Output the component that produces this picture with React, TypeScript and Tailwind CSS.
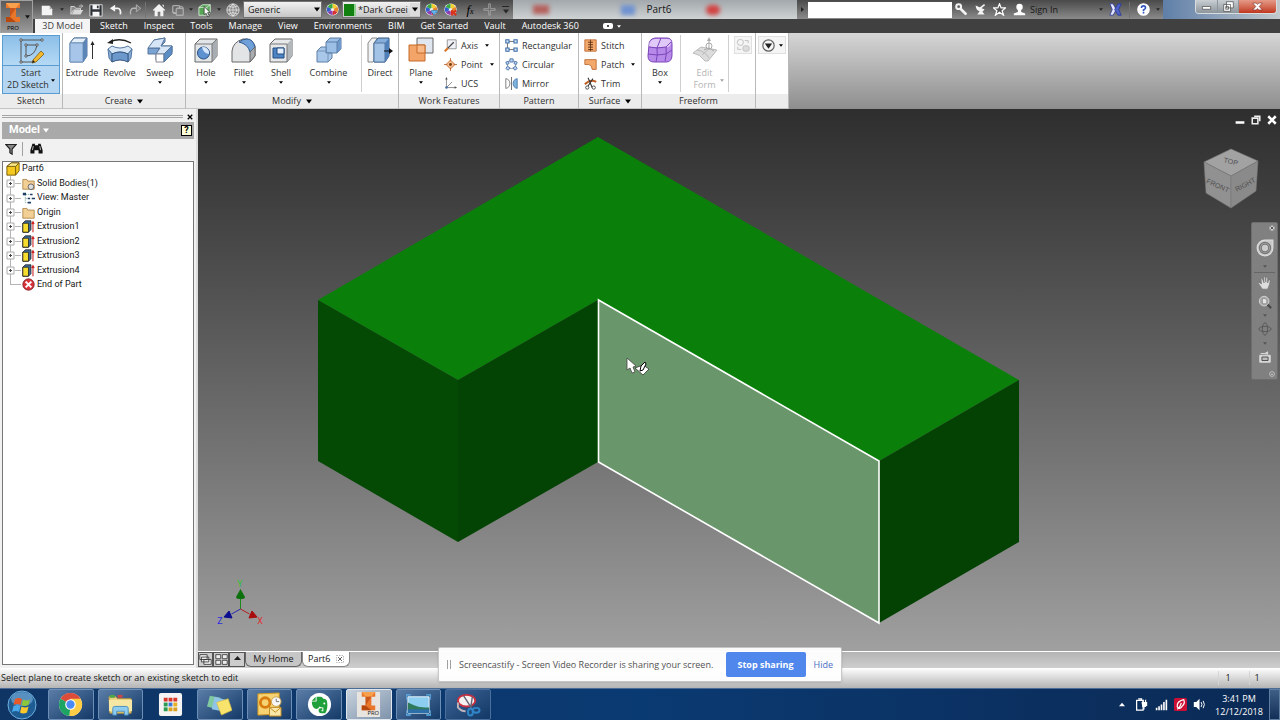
import type { ReactNode } from "react";

const ICON_BLUE = "#3f6ea8";

function Icon({ size = 16, box = 16, children }: { size?: number; box?: number; children: ReactNode }) {
  return (
    <svg width={size} height={size} viewBox={`0 0 ${box} ${box}`} fill="none" className="shrink-0" aria-hidden="true">
      {children}
    </svg>
  );
}

function Caret({ className = "text-black", width = 4 }: { className?: string; width?: number }) {
  return (
    <svg width={width} height={width - 1} viewBox="0 0 6 4" className={`shrink-0 ${className}`} aria-hidden="true">
      <path d="M0 0h6L3 4z" fill="currentColor" />
    </svg>
  );
}

/* ---------- Title bar ---------- */

function InventorMark() {
  return (
    <>
      <path d="M4 1h14v5h-4v9h4v5H4v-5h4V6H4z" fill="#e8762b" />
      <path d="M4 1h14l-4 5H8z" fill="#f9a04c" />
      <path d="M4 20v-5h4l6 5z" fill="#b9480f" />
      <path d="M8 6h6l-6 9z" fill="#c9571b" />
    </>
  );
}

function ColorWheel({ badge }: { badge?: "down" | "x" }) {
  return (
    <Icon size={13}>
      <circle cx="8" cy="8" r="7.500" fill="#fff" />
      <path d="M8 8V1a7 7 0 0 1 6 3.500z" fill="#f0d030" />
      <path d="M8 8l6-3.500a7 7 0 0 1 0 7z" fill="#e8862a" />
      <path d="M8 8l6 3.500A7 7 0 0 1 8 15z" fill="#d83030" />
      <path d="M8 8v7a7 7 0 0 1-6-3.500z" fill="#8a3fb0" />
      <path d="M8 8l-6 3.500a7 7 0 0 1 0-7z" fill="#3560d0" />
      <path d="M8 8L2 4.500A7 7 0 0 1 8 1z" fill="#3aa845" />
      <circle cx="8" cy="8" r="2" fill="#eee" />
      {badge === "down" && <path d="M8 9h7v3h-2l-2 3-2-3H8z" fill="#62b8f0" stroke="#1c5c94" strokeWidth=".6" />}
      {badge === "x" && <path d="M9 9l6 6M15 9l-6 6" stroke="#d8341c" strokeWidth="2.500" />}
    </Icon>
  );
}

const quickIcons: { label: string; width: string; node: ReactNode }[] = [
  { label: "New", width: "w-[20px]", node: <Icon size={14}><path d="M2 3h9l3 4v7H2z" fill="#f4f4f4" /><path d="M11 3v4h3z" fill="#aaa" /></Icon> },
  { label: "New options", width: "w-[10px]", node: <Caret className="text-neutral-800" /> },
  { label: "Open", width: "w-[19px]", node: <Icon size={14}><path d="M1 13V4h4l1.500 2H12v2H4z" fill="#8a8a8a" stroke="#ddd" /><path d="M2 13l3-5h10l-3 5z" fill="#d8d8d8" /><path d="M10 3.500h4M12.500 1.500l2 2-2 2" stroke="#ccc" /></Icon> },
  { label: "Save", width: "w-[20px]", node: <Icon size={14}><path d="M1 2h14v13H1z" fill="#2f3338" stroke="#e8e8e8" /><path d="M4 2h8v5H4zM4 10h8v5H4z" fill="#f6f6f6" /><path d="M9 3h2v3H9z" fill="#333" /></Icon> },
  { label: "Undo", width: "w-[19px]", node: <Icon size={14}><path d="M4 6h6q4 1 3 7" stroke="#f4f4f4" strokeWidth="2" /><path d="M1 6l6-4v8z" fill="#f4f4f4" /></Icon> },
  { label: "Redo", width: "w-[20px]", node: <Icon size={14}><path d="M12 6H6Q2 7 3 13" stroke="#b4b4b4" strokeWidth="1.500" /><path d="M14.500 6l-5-4v8z" fill="#777" stroke="#b4b4b4" /></Icon> },
];

const quickIconsRight: { label: string; width: string; node: ReactNode }[] = [
  { label: "Home", width: "w-[20px]", node: <Icon size={14}><path d="M8 1l7 7-1 1-1-1v7H9.500v-5h-3v5H3V8L2 9 1 8z" fill="#f2f2f2" /><path d="M11.500 2h2v3z" fill="#f2f2f2" /></Icon> },
  { label: "Link", width: "w-[18px]", node: <Icon size={14}><rect x="2" y="3" width="8" height="8" rx="1" stroke="#aaa" strokeWidth="1.500" /><rect x="6" y="6" width="8" height="8" rx="1" fill="#777" stroke="#aaa" strokeWidth="1.500" /><path d="M9 5q4-3 5 1M6 12q-4 1-4-2" stroke="#bbb" /></Icon> },
  { label: "Link options", width: "w-[8px]", node: <Caret className="text-neutral-800" /> },
  { label: "Select", width: "w-[20px]", node: <Icon size={14}><path d="M1 5l4-3h9v9l-4 3H1z" fill="#57a557" stroke="#d9ead9" /><path d="M1 5h9v9M10 5l4-3" stroke="#d9ead9" /><path d="M7 4l7 7h-3l2 4-2 1-1.500-4L7 13z" fill="#fff" stroke="#222" strokeWidth=".8" /></Icon> },
  { label: "Select options", width: "w-[8px]", node: <Caret className="text-neutral-800" /> },
  { label: "Appearance", width: "w-[20px]", node: <Icon size={14}><circle cx="8" cy="8" r="7" fill="#888" stroke="#ddd" /><path d="M8 1v14M1 8h14M3 3.500q5 3 10 0M3 12.500q5-3 10 0M8 1q-8 7 0 14M8 1q8 7 0 14" stroke="#eee" strokeWidth=".8" /></Icon> },
];

function TitleBar() {
  return (
    <div className="flex h-[19px] items-stretch bg-linear-to-b from-[#4a4a4a] to-[#8b8b8b]">
      <div className="flex items-center pl-1">
        {quickIcons.map((q) => (
          <button key={q.label} aria-label={q.label} className={`flex items-center justify-center ${q.width}`}>{q.node}</button>
        ))}
        <span className="h-4 w-px bg-neutral-500" />
        <span className="w-[3px]" />
        {quickIconsRight.map((q) => (
          <button key={q.label} aria-label={q.label} className={`flex items-center justify-center ${q.width}`}>{q.node}</button>
        ))}
      </div>
      <div className="flex items-center">
        <label className="relative flex w-[79px] items-center">
          <select aria-label="Material" className="h-[17px] w-full appearance-none border border-neutral-500 bg-linear-to-b from-[#f2f2f2] to-[#c6c6c6] pl-1 text-neutral-900">
            <option>Generic</option>
          </select>
          <span className="pointer-events-none absolute right-[2px]"><Caret width={6} /></span>
        </label>
        <button aria-label="Adjust appearance" className="flex w-[20px] justify-center"><ColorWheel /></button>
        <label className="relative flex w-[79px] items-center">
          <select aria-label="Appearance" className="h-[17px] w-full appearance-none border border-neutral-500 bg-linear-to-b from-[#f2f2f2] to-[#c6c6c6] pl-[15px] text-neutral-900">
            <option>*Dark Greei</option>
          </select>
          <span className="pointer-events-none absolute left-[2px] size-[12px] border-r-2 border-[#8fd08f] bg-[#118011]" />
          <span className="pointer-events-none absolute right-[1px] bg-[#dcdcdc] px-[2px] py-1"><Caret width={6} /></span>
        </label>
        <button aria-label="Adjust" className="flex w-[20px] justify-center"><ColorWheel badge="down" /></button>
        <button aria-label="Clear" className="flex w-[19px] justify-center"><ColorWheel badge="x" /></button>
        <button className="w-[20px] text-center font-['Liberation_Serif',serif] text-[13px] leading-none text-black italic">f<span className="text-[8px]">x</span></button>
        <button aria-label="Add" className="flex w-[18px] justify-center"><Icon size={13}><path d="M7 1h2v6h6v2H9v6H7V9H1V7h6z" stroke="#a8a8a8" /></Icon></button>
        <button aria-label="Customize" className="flex w-[15px] flex-col items-center gap-[2px]"><span className="h-px w-[7px] bg-neutral-800" /><Caret className="text-neutral-800" width={6} /></button>
      </div>
      <div className="relative flex min-w-0 flex-1 items-center justify-center overflow-hidden bg-linear-to-b from-[#a2a8ac] to-[#cfd2d3] text-neutral-900">
        <span className="absolute left-[20px] h-[9px] w-[16px] bg-[#b5605c] blur-[2px]" />
        <span className="absolute left-[108px] h-[10px] w-[14px] bg-[#6f92d0] blur-[2px]" />
        <span className="absolute left-[193px] h-[10px] w-[14px] rounded-full bg-[#d34343] blur-[2px]" />
        <span className="relative pl-2 text-[10px]">Part6</span>
      </div>
      <div className="flex w-[366px] shrink-0 items-center">
        <span className="w-[11px] shrink-0 pl-1"><svg width="3" height="5" viewBox="0 0 3 5" aria-hidden="true"><path d="M0 0l3 2.500L0 5z" fill="#222" /></svg></span>
        <input aria-label="Search" className="h-[16px] w-[144px] shrink-0 bg-white px-1" />
        <div className="flex flex-1 items-center">
          <button aria-label="Subscription" className="flex w-[19px] justify-center"><Icon size={13}><circle cx="4.500" cy="4.500" r="3" stroke="#f4f4f4" strokeWidth="2.500" /><path d="M7 5l8 8-1.500 2-2-1-7-7z" fill="#f4f4f4" /></Icon></button>
          <button aria-label="Communication" className="flex w-[19px] justify-center"><Icon size={13}><path d="M2 3q0 7 8 8L13 8zM4 14h9l-3-4H7z" fill="#f4f4f4" /><path d="M7 7l6-5" stroke="#f4f4f4" strokeWidth="2" /></Icon></button>
          <button aria-label="Favorites" className="flex w-[19px] justify-center"><Icon size={13}><path d="M8 1l2 5h5.500l-4.300 3.500L13 15 8 11.500 3 15l1.800-5.500L.5 6H6z" fill="#555" stroke="#fff" strokeWidth="1.500" /></Icon></button>
          <button className="flex w-[96px] items-center gap-1 pl-1 text-neutral-900">
            <Icon size={13}><circle cx="8" cy="5" r="4" fill="#fff" /><path d="M6 8h4v3l5 2v2H1v-2l5-2z" fill="#fff" /></Icon>
            Sign In
          </button>
          <span className="-ml-2 flex w-2 justify-center"><Caret className="text-neutral-800" /></span>
          <button aria-label="Exchange" className="flex w-[20px] justify-center"><Icon size={13}><path d="M1 1h4l4 7-4 7H1l3-7z" fill="#e6e8ff" stroke="#2c3a98" /><path d="M15 1h-4L7 8l4 7h4l-3-7z" fill="#4e62c8" stroke="#2c3a98" /></Icon></button>
          <span className="mx-1 h-4 w-px bg-neutral-500" />
          <button aria-label="Help" className="flex w-[19px] justify-center"><Icon size={13}><circle cx="8" cy="8" r="7" fill="#fff" stroke="#fff" strokeWidth="1.500" /><path d="M5.500 6q0-2.500 2.500-2.500T10.500 6Q10.500 7 8 8.500V10M8 11v2" stroke="#2f55c0" strokeWidth="2" /></Icon></button>
          <span className="ml-[3px]"><Caret className="text-neutral-800" /></span>
        </div>
      </div>
      <div className="flex w-[117px] shrink-0 items-start justify-end bg-linear-to-r from-[#5f7fa8] to-[#c3c9cc] pr-[3px]">
        <div className="flex h-[14px] overflow-hidden rounded-b-sm border border-t-0 border-[#d8dde0]">
          <button aria-label="Minimize" className="flex w-[22px] items-center justify-center border-r border-[#8e969b] bg-linear-to-b from-[#c9cfd3] to-[#8d969c]"><Icon size={11}><path d="M2 8h12v4H2z" fill="#fff" stroke="#444" /></Icon></button>
          <button aria-label="Restore" className="flex w-[21px] items-center justify-center border-r border-[#8e969b] bg-linear-to-b from-[#c9cfd3] to-[#8d969c]"><Icon size={11}><path d="M5 1h10v9H5zM1 5h10v10H1zM4 8h4v4H4z" stroke="#444" strokeWidth="1" fill="#fff" /></Icon></button>
          <button aria-label="Close" className="flex w-[37px] items-center justify-center bg-linear-to-b from-[#e49a88] to-[#c0351c]"><Icon size={11}><path d="M1 3h5l2 2 2-2h5l-4.500 5L15 13h-5l-2-2-2 2H1l4.500-5z" fill="#fff" stroke="#6a2018" strokeWidth=".8" /></Icon></button>
        </div>
      </div>
    </div>
  );
}

const tabs = ["Sketch", "Inspect", "Tools", "Manage", "View", "Environments", "BIM", "Get Started", "Vault", "Autodesk 360"];

function Header() {
  return (
    <header className="flex bg-[#404040]">
      <button aria-label="Inventor Professional menu" className="flex h-[33px] w-[33px] shrink-0 items-center border border-neutral-400 bg-linear-to-b from-[#5a5a5a] to-[#9a9a9a]">
        <span className="flex w-6 flex-col items-center text-[6px] leading-[8px] text-black">
          <Icon size={22} box={22}><InventorMark /></Icon>
          PRO
        </span>
        <Caret className="text-neutral-900" width={5} />
      </button>
      <div className="min-w-0 flex-1">
        <TitleBar />
        <nav className="flex h-[14px] items-center gap-4 leading-[14px] text-white">
          <button className="-mr-[6px] ml-[2px] h-full w-[55px] bg-[#f4f4f4] text-neutral-700">3D Model</button>
          {tabs.map((t) => (
            <button key={t} className="whitespace-nowrap">{t}</button>
          ))}
          <button aria-label="Display options" className="ml-2 flex items-center gap-1">
            <span className="flex h-[6px] w-[10px] items-center justify-center rounded-xs bg-white"><span className="size-[2px] bg-neutral-600" /></span>
            <Caret className="text-white" />
          </button>
        </nav>
      </div>
    </header>
  );
}

/* ---------- Ribbon ---------- */

const big = {
  sketch: (
    <Icon size={26} box={26}>
      <path d="M3 2v22M3 2h21M3 24h12" stroke="#555" />
      <path d="M8 7v11q9 0 11-11z" stroke="#555" />
      <path d="M2 1h2v2H2zM23 1h2v2h-2zM2 23h2v2H2zM7 6h2v2H7zM18 6h2v2h-2zM7 17h2v2H7z" fill="#fff" stroke="#444" strokeWidth=".8" />
      <path d="M15 22l8-9 3 3-8 8-4 1z" fill="#f2b92e" stroke="#7d5b10" strokeWidth=".8" />
      <path d="M14 25l1-3 2 2z" fill="#222" />
    </Icon>
  ),
  extrude: (
    <Icon size={26} box={26}>
      <path d="M1 6l4-5h13v18l-4 6H1z" fill="#7fa6d3" stroke="#55779f" />
      <path d="M1 6l4-5h13l-4 5z" fill="#e5effa" stroke="#55779f" />
      <path d="M1 6h13v19H1z" fill="#a6c5e8" stroke="#7294bb" />
      <path d="M14 6l4-5v18l-4 6z" fill="#5c86b8" />
      <path d="M23.500 22V6" stroke="#333" /><path d="M21.500 8l2-4 2 4z" fill="#222" />
    </Icon>
  ),
  revolve: (
    <Icon size={26} box={26}>
      <path d="M3 5q10-5 21 1" stroke="#222" strokeWidth="1.300" /><path d="M0 6l6-4v5z" fill="#222" />
      <path d="M1 12l4-3q8 4 16 0l4 3-4 5q-8-4-16 0z" fill="#d9e8f8" stroke="#55779f" />
      <path d="M1 12l4 5v8l-3-4z" fill="#86add8" stroke="#55779f" />
      <path d="M25 12l-4 5v8l3-4z" fill="#86add8" stroke="#55779f" />
      <path d="M5 17q8-4 16 0v8q-8-4-16 0z" fill="#6c98cb" stroke="#35577f" />
    </Icon>
  ),
  sweep: (
    <Icon size={26} box={26}>
      <path d="M1 11h11v6H1z" fill="#7aa3d2" stroke="#55779f" />
      <path d="M7 3l11-2v4l-4 4h11v6l-8 8H9v-6l4-6z" fill="#7aa3d2" stroke="#55779f" />
      <path d="M7 3l11-2-4 8h11l-8 8H9l4-6H1z" fill="#d7e6f6" stroke="#55779f" />
      <path d="M9 17h8v8H9z" fill="#fff" stroke="#889" /><path d="M17 17l8-8v8l-8 8z" fill="#5c8cc4" stroke="#55779f" />
    </Icon>
  ),
  hole: (
    <Icon size={26} box={26}>
      <path d="M2 7l5-5h17v17l-5 6H2z" fill="#e2e5e8" stroke="#666" /><path d="M19 7l5-5v17l-5 6z" fill="#a7adb3" /><path d="M2 7h17v18M19 7l5-5" stroke="#777" />
      <circle cx="10.500" cy="16" r="6" fill="#5f92d0" stroke="#234c80" />
      <path d="M9 10a6 6 0 0 1 7 7q-6-1-7-7z" fill="#d7e8fa" />
    </Icon>
  ),
  fillet: (
    <Icon size={26} box={26}>
      <path d="M1 25V14Q2 5 12 2q9-1 12 7v10l-5 6z" fill="#e2e4e6" stroke="#666" />
      <path d="M8 5q4-3 8-3 6 0 8 8l-5 5Q17 7 8 5z" fill="#6fa0da" stroke="#2f5b90" />
      <path d="M19 15v10l5-6v-9z" fill="#a9adb1" stroke="#666" />
    </Icon>
  ),
  shell: (
    <Icon size={26} box={26}>
      <path d="M2 7l5-5h17v17l-5 6H2z" fill="#e6e8ea" stroke="#666" /><path d="M19 7l5-5v17l-5 6z" fill="#b2b7bc" /><path d="M2 7h17v18" stroke="#777" />
      <path d="M5 11h11v10H5z" fill="#4c84c4" stroke="#234c80" /><path d="M9 11h7v6H9z" fill="#e3effc" stroke="#234c80" />
    </Icon>
  ),
  combine: (
    <Icon size={26} box={26}>
      <path d="M10 5l4-4h11v11l-4 4H10z" fill="#9cbfe5" stroke="#5c7fa8" /><path d="M21 5l4-4v11l-4 4z" fill="#6f99ca" /><path d="M10 5h11v11M21 5l4-4" stroke="#5c7fa8" />
      <path d="M1 14l4-4h5v6h6v5l-4 4H1z" fill="#a9c7e9" stroke="#5c7fa8" /><path d="M1 14h9M12 17v8M12 17l4-1" stroke="#7795b8" />
    </Icon>
  ),
  direct: (
    <Icon size={26} box={26}>
      <path d="M1 6l4-5h5v19l-4 5H1z" fill="#f0f1f2" stroke="#888" /><path d="M7 6l4-5h11v18l-4 6H7z" fill="#86aedb" stroke="#35577f" />
      <path d="M7 6h11v19H7z" fill="#a3c3e6" stroke="#55779f" /><path d="M18 6l4-5v18l-4 6z" fill="#4f7fb8" />
      <path d="M17 14h6" stroke="#111" /><path d="M22 11l4 3-4 3z" fill="#111" />
    </Icon>
  ),
  plane: (
    <Icon size={26} box={26}>
      <path d="M9 1h16v15H9z" fill="#dfe6ef" stroke="#666" /><path d="M1 8h16v16H1z" fill="#f3a468" stroke="#c56a28" /><path d="M9 8h8v8H9z" fill="#f7b988" stroke="#c56a28" />
    </Icon>
  ),
  box: (
    <Icon size={26} box={26}>
      <path d="M2 8q0-6 6-7h12q5 0 5 6v11q0 7-6 7H7q-6 0-6-6z" fill="#b78aea" stroke="#7a45b8" />
      <path d="M2 9q0-6 6-7h12q5 0 4 4-1 5-5 4H7q-5 0-5-1z" fill="#e0c8f8" />
      <path d="M2 10q8 2 17 0l5-5M19 10q1 8-1 14M10 11q1 7-1 14M1 17q9 2 18 0l6-4M10 11l4-10" stroke="#7a45b8" />
    </Icon>
  ),
  edit: (
    <Icon size={26} box={26}>
      <path d="M1 16l8-6 16 3-9 11h-3q-5-7-12-8z" fill="#dcdcdc" stroke="#bbb" /><path d="M5 13q8 1 12 8M10 18l8-7" stroke="#bbb" />
      <path d="M17 13V2M12 13l5-2 5 3" stroke="#aaa" /><circle cx="17" cy="9" r="3" stroke="#aaa" /><path d="M15 4l2-4 2 4z" fill="#aaa" />
    </Icon>
  ),
};

const small = {
  axis: <Icon size={13}><path d="M4 1h11v11H4z" stroke="#888" fill="#eef1f5" /><path d="M1 15L12 4" stroke="#444" strokeWidth="1.500" /><path d="M1 15l4-4" stroke="#e07828" strokeWidth="2.500" /></Icon>,
  point: <Icon size={13}><path d="M8 2.500L13.500 8 8 13.500 2.500 8z" fill="#f7c08e" stroke="#b8622a" /><path d="M8 0v4M8 12v4M0 8h4M12 8h4" stroke="#b8622a" /><circle cx="8" cy="8" r="1.800" fill="#7a3a12" /></Icon>,
  ucs: <Icon size={13}><path d="M3 1v12h12M3 13l7-7" stroke="#777" /><path d="M1.500 3L3 0l1.500 3zM13 11.500l3 1.500-3 1.500z" fill="#555" /><circle cx="3" cy="13" r="1.500" fill={ICON_BLUE} /></Icon>,
  rect: <Icon size={13}><path d="M3 5v6M5 3h6M5 13h6" stroke="#555" /><path d="M1 1h4v4H1zM11 1h4v4h-4zM1 11h4v4H1zM11 11h4v4h-4z" fill="#cfe0f4" stroke={ICON_BLUE} strokeWidth="1.300" /></Icon>,
  circ: <Icon size={13}><circle cx="8" cy="8" r="5" stroke="#888" /><path d="M6 1h4v4H6zM1 5l3-1 1 3-3 1zM12 4l3 1-1 3-3-1zM3 10l3 2-2 3-3-2zM13 10l2 3-3 2-2-3z" fill="#bcd3ef" stroke={ICON_BLUE} /></Icon>,
  mirror: <Icon size={13}><path d="M8 0v16" stroke="#555" /><path d="M1 2q5 1 5 6t-5 6z" fill="#fff" stroke="#666" /><path d="M15 2q-5 1-5 6t5 6z" fill="#7fb4dc" stroke={ICON_BLUE} /></Icon>,
  stitch: <Icon size={13}><path d="M1 1h14v14H1z" fill="#f3a86c" stroke="#b8622a" /><path d="M8 1v14" stroke="#6b3512" /><path d="M5 4h6M5 7h6M5 10h6M5 13h6" stroke="#4a2409" /></Icon>,
  patch: <Icon size={13}><path d="M1 2h14v12h-5q0-5-4-6H1z" fill="#f3a86c" stroke="#b8622a" /></Icon>,
  trim: <Icon size={13}><path d="M1 9q7-7 14-3" stroke="#c06028" strokeWidth="2.500" /><path d="M5 1l5 12M11 2L5 11" stroke="#333" strokeWidth="1.300" /><circle cx="4" cy="13" r="2" stroke="#333" /><circle cx="12" cy="13" r="2" stroke="#333" /></Icon>,
};

type BigTool = { label: string; icon: ReactNode; width: string; menu?: boolean };

function BigButton({ label, icon, width, menu }: BigTool) {
  return (
    <button className={`flex shrink-0 flex-col items-center pt-1 ${width}`}>
      {icon}
      <span className="mt-1 leading-[12px]">{label}</span>
      {menu && <span className="mt-[2px]"><Caret /></span>}
    </button>
  );
}

function SmallButton({ label, icon, menu }: { label: string; icon: ReactNode; menu?: boolean }) {
  return (
    <button className="flex h-[19px] items-center gap-1 text-left">
      {icon}
      <span>{label}</span>
      {menu && <span className="ml-[3px]"><Caret /></span>}
    </button>
  );
}

function Panel({ title, width, menu, children }: { title: string; width: string; menu?: boolean; children?: ReactNode }) {
  return (
    <section className={`flex shrink-0 flex-col border-r border-[#b9b9b9] bg-white ${width}`}>
      <div className="flex flex-1 items-stretch">{children}</div>
      <div className="flex h-[15px] items-center justify-center gap-[5px] border-b border-[#c4c4c4] bg-[#ececec]">
        {title}
        {menu && <Caret width={6} />}
      </div>
    </section>
  );
}

const createTools: BigTool[] = [
  { label: "Extrude", icon: big.extrude, width: "w-[38px]" },
  { label: "Revolve", icon: big.revolve, width: "w-[37px]" },
  { label: "Sweep", icon: big.sweep, width: "w-[44px]", menu: true },
];

const modifyTools: BigTool[] = [
  { label: "Hole", icon: big.hole, width: "w-[38px]", menu: true },
  { label: "Fillet", icon: big.fillet, width: "w-[37px]", menu: true },
  { label: "Shell", icon: big.shell, width: "w-[38px]", menu: true },
  { label: "Combine", icon: big.combine, width: "w-[57px]", menu: true },
];

function Ribbon() {
  return (
    <div className="flex h-[76px] bg-linear-to-b from-[#d6d6d6] to-[#8e8e8e] text-[#303030]">
      <Panel title="Sketch" width="w-[63px]">
        <button className="m-[2px] mb-0 flex flex-1 flex-col items-center border border-[#5a9bd0] bg-[#b4d6f2]">
          <span className="flex h-[30px] w-full items-center justify-center border-b border-[#5a9bd0] bg-linear-to-b from-[#8dbfe8] to-[#b4d9f5]">{big.sketch}</span>
          <span className="pt-px leading-[12px]">Start</span>
          <span className="flex gap-[2px] leading-[12px] whitespace-nowrap">2D Sketch <Caret /></span>
        </button>
      </Panel>
      <Panel title="Create" width="w-[123px]" menu>
        {createTools.map((t) => <BigButton key={t.label} {...t} />)}
      </Panel>
      <Panel title="Modify" width="w-[213px]" menu>
        <span className="w-px" />
        {modifyTools.map((t) => <BigButton key={t.label} {...t} />)}
        <span className="my-[2px] ml-[4px] w-px bg-[#cfcfcf]" />
        <BigButton label="Direct" icon={big.direct} width="w-[36px]" />
      </Panel>
      <Panel title="Work Features" width="w-[101px]">
        <BigButton label="Plane" icon={big.plane} width="w-[44px]" menu />
        <div className="flex flex-col pt-[3px] pl-px">
          <SmallButton label="Axis" icon={small.axis} menu />
          <SmallButton label="Point" icon={small.point} menu />
          <SmallButton label="UCS" icon={small.ucs} />
        </div>
      </Panel>
      <Panel title="Pattern" width="w-[79px]">
        <div className="flex flex-col pt-[3px] pl-[5px]">
          <SmallButton label="Rectangular" icon={small.rect} />
          <SmallButton label="Circular" icon={small.circ} />
          <SmallButton label="Mirror" icon={small.mirror} />
        </div>
      </Panel>
      <Panel title="Surface" width="w-[63px]" menu>
        <div className="flex flex-col pt-[3px] pl-[5px]">
          <SmallButton label="Stitch" icon={small.stitch} />
          <SmallButton label="Patch" icon={small.patch} menu />
          <SmallButton label="Trim" icon={small.trim} />
        </div>
      </Panel>
      <Panel title="Freeform" width="w-[114px]">
        <BigButton label="Box" icon={big.box} width="w-[36px]" menu />
        <span className="my-[2px] ml-[2px] w-px bg-[#cfcfcf]" />
        <button disabled className="flex w-[47px] flex-col items-center pt-1 text-[#b4b4b4]">
          {big.edit}
          <span className="mt-1 leading-[12px]">Edit</span>
          <span className="flex gap-1 pl-2 leading-[12px]">Form <Caret className="text-neutral-400" /></span>
        </button>
        <span className="my-[2px] w-px bg-[#cfcfcf]" />
        <button disabled aria-label="Convert" className="mt-[3px] ml-[5px] flex size-[18px] items-center justify-center border border-[#e0e0e0] bg-[#f5f5f5]">
          <Icon size={14}><circle cx="5" cy="5" r="3.500" stroke="#bbb" /><path d="M10 3h4v3M2 10v3h4" stroke="#bbb" /><rect x="8" y="9" width="7" height="6" rx="2" fill="#ddd" stroke="#bbb" /></Icon>
        </button>
      </Panel>
      <Panel title="" width="w-[33px]">
        <button aria-label="Sketch doctor" className="mt-[3px] ml-[2px] flex h-[18px] w-[28px] items-center justify-center gap-1 border border-[#e0e0e0] bg-[#f5f5f5]">
          <Icon size={13}><circle cx="8" cy="8" r="7" stroke="#666" strokeWidth="1.500" /><path d="M3.500 5.500h9L8 12z" fill="#222" /></Icon>
          <Caret />
        </button>
      </Panel>
    </div>
  );
}

/* ---------- Model browser ---------- */

const folder = <path d="M1 3h5l1 2h8v10H1z" fill="#f2cf94" stroke="#a97f3d" />;
const extrusion = (
  <>
    <path d="M1 4l3-3h7v11l-3 3H1z" fill="#3f6b9a" stroke="#222" />
    <path d="M1 4h7v11H1z" fill="#f6dc2d" stroke="#222" />
    <path d="M13.500 15V3M12 5l1.500-3L15 5" stroke="#c22" strokeWidth="1.300" />
  </>
);

const nodes: { label: string; icon: ReactNode }[] = [
  { label: "Solid Bodies(1)", icon: <>{folder}<circle cx="11" cy="12" r="3.500" fill="#ddd" stroke="#555" /></> },
  { label: "View: Master", icon: <><path d="M4 3v10h3M4 8h3M4 3h7" stroke="#8aa" strokeDasharray="2 1" /><path d="M1 1h4v3H1zM10 2h3v2h-3zM7 7h3v2H7zM12 7h4v2h-4zM7 12h4v2H7z" fill="#1d3f66" /></> },
  { label: "Origin", icon: folder },
  { label: "Extrusion1", icon: extrusion },
  { label: "Extrusion2", icon: extrusion },
  { label: "Extrusion3", icon: extrusion },
  { label: "Extrusion4", icon: extrusion },
];

function ModelBrowser() {
  return (
    <aside className="flex w-[198px] shrink-0 flex-col border-r-2 border-[#dcdcdc] bg-[#f1f1f1] px-[2px] pb-[3px] font-['Roboto',sans-serif]">
      <div className="flex h-[13px] items-center gap-1 pt-[2px] pr-px">
        <span className="h-[3px] flex-1 border-y border-[#a5a5a5]" />
        <button aria-label="Close browser"><Icon size={6}><path d="M2 2l12 12M14 2L2 14" stroke="#000" strokeWidth="3.500" /></Icon></button>
      </div>
      <div className="flex h-[17px] items-center gap-[3px] bg-[#a9a9a9] pr-[2px] pl-[7px] text-[11px] font-bold text-white">
        Model
        <Caret className="text-white" width={6} />
        <button aria-label="Help" className="ml-auto flex size-[11px] items-center justify-center border border-black bg-[#ffffd8] text-[9px] leading-none text-black">?</button>
      </div>
      <div className="flex h-[22px] items-center gap-[5px] pb-[3px] pl-[3px]">
        <button aria-label="Filter"><Icon size={12}><path d="M1 2h14L9.500 8v7L6.500 13V8z" fill="#888" stroke="#222" strokeWidth="1.500" /></Icon></button>
        <span className="h-[14px] w-px bg-neutral-400" />
        <button aria-label="Find" className="pl-[2px]"><Icon size={13}><path d="M3 2h3v2h4V2h3l2.500 8v4h-5v-4h-5v4h-5v-4z" fill="#111" /><path d="M4 5l-1 5M12 5l1 5" stroke="#ddd" /></Icon></button>
      </div>
      <div className="flex-1 border border-[#777] bg-white">
        <ul className="grid h-[130px] grid-rows-9 text-neutral-900">
          <li className="flex items-center gap-[2px] pl-[3px]">
            <Icon size={14}><path d="M1 5l5-4h9v9l-4 5H1z" fill="#f4c81e" stroke="#6b5208" /><path d="M1 5h10l4-4H6z" fill="#fbe888" stroke="#6b5208" /><path d="M11 5v10" stroke="#6b5208" /></Icon>
            Part6
          </li>
          {nodes.map((n) => (
            <li key={n.label} className="relative flex items-center pl-[3px]">
              <span className="absolute inset-y-0 left-[7px] w-px bg-[#b5b5b5]" />
              <button aria-label={`Expand ${n.label}`} className="relative"><Icon size={9} box={9}><path d="M1 1h7v7H1z" fill="#fff" stroke="#aaa" /><path d="M3 4.500h3M4.500 3v3" stroke="#444" /></Icon></button>
              <span className="h-px w-[6px] bg-[#b5b5b5]" />
              <span className="mr-[2px] ml-px"><Icon size={13}>{n.icon}</Icon></span>
              {n.label}
            </li>
          ))}
          <li className="relative flex items-center pl-[19px]">
            <span className="absolute top-0 left-[7px] h-1/2 w-[11px] border-b border-l border-[#b5b5b5]" />
            <span className="mr-[2px]"><Icon size={13}><circle cx="8" cy="8" r="7" fill="#d8343c" stroke="#7d1a20" /><path d="M4.500 4.500l7 7M11.500 4.500l-7 7" stroke="#fff" strokeWidth="2.500" /></Icon></span>
            End of Part
          </li>
        </ul>
      </div>
    </aside>
  );
}

/* ---------- Graphics window ---------- */

function Scene() {
  return (
    <svg viewBox="198 109 1082 542" preserveAspectRatio="xMidYMid slice" className="h-full w-full" role="img" aria-label="Part6 model">
      {/* solid */}
      <path d="M598 137l421 243-140 81-281-161-140 80-140-80z" fill="#0a800b" />
      <path d="M318 300l140 80v162l-140-81z" fill="#044904" />
      <path d="M458 380l140-80v162l-140 80z" fill="#034303" />
      <path d="M1019 380v162l-140 81V461z" fill="#044204" />
      <path d="M598.500 300l280.500 161v162L598.500 462z" fill="#6a966b" stroke="#fff" strokeWidth="1.600" />
      {/* cursor */}
      <path d="M627 358v12l3-2 2 5 3-1-2-5 3-1z" fill="#fff" stroke="#444" strokeWidth=".8" />
      <path d="M635 368l8 7 6-6-6-4z" fill="#fff" stroke="#333" strokeWidth=".8" />
      <path d="M640 371l1-5 4-4 1 2-3 6z" fill="#fff" stroke="#000" />
      {/* triad */}
      <path d="M240.500 609v-12" stroke="#1a8a1a" />
      <path d="M240.500 609l-9 5" stroke="#2a2ab0" />
      <path d="M240.500 609l9 5" stroke="#b02020" />
      <path d="M240.500 589l4.500 8q0 2-4.500 2t-4.500-2z" fill="#0c700c" />
      <path d="M224 617l5-6 3 7z" fill="#0c0c90" stroke="#0c0c90" />
      <path d="M257 617l-5-6-3 7z" fill="#a80c0c" stroke="#a80c0c" />
      <g fontFamily="Roboto, sans-serif" fontSize="9" textAnchor="middle">
        <text x="240" y="587" fill="#35c035">Y</text>
        <text x="220" y="624" fill="#2a2ae0">Z</text>
        <text x="260" y="624" fill="#e03030">X</text>
      </g>
    </svg>
  );
}

function ViewCube() {
  return (
    <svg width="60" height="64" viewBox="1201 146 60 64" aria-hidden="true">
      <path d="M1231 149l27 12-27 15-27-14z" fill="#a2a2a2" stroke="#777" strokeWidth=".6" />
      <path d="M1204 162l27 14v32l-25-15z" fill="#919191" stroke="#777" strokeWidth=".6" />
      <path d="M1258 161l-27 15v32l25-17z" fill="#8a8a8a" stroke="#777" strokeWidth=".6" />
      <g fontFamily="Liberation Sans, sans-serif" fontSize="7" textAnchor="middle" fill="#505050">
        <text x="1231" y="164" transform="rotate(14 1231 161)">TOP</text>
        <text x="1218" y="188" transform="rotate(24 1218 185)">FRONT</text>
        <text x="1245" y="187" transform="rotate(-28 1245 184)">RIGHT</text>
      </g>
    </svg>
  );
}

function NavBar() {
  return (
    <div className="flex h-[158px] w-[27px] flex-col items-center rounded-xs border border-[#6d6d6d] bg-[#808080]">
      <button aria-label="Close navigation bar" className="mt-[2px] mr-[2px] self-end"><Icon size={6}><circle cx="8" cy="8" r="7" fill="#ccc" /><path d="M4 4l8 8M12 4l-8 8" stroke="#333" strokeWidth="2" /></Icon></button>
      <button aria-label="Steering wheel" className="mt-2"><Icon size={18}><path d="M8 1h7v7a7 7 0 1 1-7-7z" fill="#c9c9c9" stroke="#ddd" /><circle cx="8" cy="8" r="5" fill="#a4a4a4" stroke="#777" /><circle cx="8" cy="8" r="3.300" fill="#ccc" stroke="#777" /></Icon></button>
      <span className="mt-[8px]"><Caret className="text-[#555]" /></span>
      <span className="mt-[4px] h-px w-[21px] shrink-0 bg-[#666]" />
      <button aria-label="Pan" className="mt-[3px]"><Icon size={14}><path d="M4 9L1 7q-1 1 0 2l4 6h6l2-5 1-5q-1-1-2 0l-1 3V2q-1-1-2 0v5L8 1Q7 0 6.500 1L7 8 5 3Q4 2 3.500 3z" fill="#ddd" stroke="#666" strokeWidth=".6" /></Icon></button>
      <button aria-label="Zoom" className="mt-[5px]"><Icon size={14}><circle cx="7" cy="7" r="5.500" fill="#aaa" stroke="#d8d8d8" /><path d="M5 4h3l2 2v4H5z" fill="#e4e4e4" stroke="#666" strokeWidth=".6" /><path d="M11 11l4 4" stroke="#4a4a4a" strokeWidth="2.500" /></Icon></button>
      <span className="mt-[5px]"><Caret className="text-[#555]" /></span>
      <button aria-label="Orbit" className="mt-[5px]"><Icon size={14}><ellipse cx="8" cy="8" rx="7" ry="3" stroke="#555" /><ellipse cx="8" cy="8" rx="3" ry="7" stroke="#555" /></Icon></button>
      <span className="mt-[6px]"><Caret className="text-[#555]" /></span>
      <button aria-label="Look at" className="mt-[5px]"><Icon size={14}><path d="M2 6h12v8H2zM3 4h5l3-2v3" fill="#d4d4d4" stroke="#ddd" /><path d="M4.500 8h7v4h-7z" fill="#bbb" stroke="#444" /></Icon></button>
      <button aria-label="Options" className="mt-auto mr-[2px] mb-[2px] self-end"><Icon size={6}><circle cx="8" cy="8" r="6.500" stroke="#ccc" strokeWidth="2" /><path d="M4 7h8l-4 4z" fill="#ccc" /></Icon></button>
    </div>
  );
}

function GraphicsWindow() {
  return (
    <main className="flex min-w-0 flex-1 flex-col">
      <div className="relative min-h-0 flex-1 bg-linear-to-b from-[#2e2e2e] to-[#a0a0a0]">
        <div className="absolute inset-0"><Scene /></div>
        <div className="absolute top-[6px] right-[3px] flex gap-[6px]">
          <button aria-label="Minimize document"><Icon size={10}><path d="M1 10h14v4H1z" fill="#fff" /></Icon></button>
          <button aria-label="Restore document"><Icon size={10}><path d="M5 2h9v8M2 5h9v9H2z" stroke="#eee" strokeWidth="2.500" /></Icon></button>
          <button aria-label="Close document"><Icon size={10}><path d="M2 2l12 12M14 2L2 14" stroke="#fff" strokeWidth="4" /></Icon></button>
        </div>
        <div className="absolute top-[37px] right-[19px]"><ViewCube /></div>
        <div className="absolute top-[113px] right-[2px]"><NavBar /></div>
      </div>
      <div className="flex h-[17px] shrink-0 items-start border-t border-white bg-linear-to-b from-[#b4b4b4] to-[#cecece] text-neutral-900">
        <button aria-label="Cascade" className="flex h-[15px] w-[15px] items-center justify-center border border-[#555] bg-[#ccc]"><Icon size={13}><path d="M1 2h9v6H1zM3 5h9v6H3zM6 8h9v6H6z" fill="#eee" stroke="#333" /></Icon></button>
        <button aria-label="Arrange" className="flex h-[15px] w-[16px] items-center justify-center border border-[#555] bg-[#ccc]"><Icon size={13}><path d="M1 2h6v5H1zM9 2h6v5H9zM1 9h6v5H1zM9 9h6v5H9z" fill="#eee" stroke="#333" /></Icon></button>
        <button aria-label="More windows" className="flex h-[15px] w-[16px] justify-center border border-[#555] bg-[#ccc] pt-[2px]"><Icon size={7} box={7}><path d="M0 5l3.500-4L7 5z" fill="#222" /></Icon></button>
        <button className="h-[15px] w-[57px] rounded-b-md border border-t-0 border-[#666] bg-[#c6c6c6] leading-[14px]">My Home</button>
        <button className="flex h-[15px] w-[48px] items-center gap-[6px] rounded-b-md border border-t-0 border-[#888] bg-white pl-[5px]">
          Part6
          <Icon size={8}><path d="M1 1h14v14H1z" stroke="#777" strokeDasharray="3 2" /><path d="M4 4l8 8M12 4l-8 8" stroke="#333" strokeWidth="1.500" /></Icon>
        </button>
      </div>
    </main>
  );
}

/* ---------- Task bar ---------- */

const apps: { label: string; frame: string; icon: ReactNode }[] = [
  {
    label: "Chrome",
    frame: "border border-[#6d8fb5] bg-linear-to-br from-[#5b7ea8] to-[#143a68]",
    icon: <><circle cx="13" cy="13" r="12" fill="#ddd" /><path d="M13 13L2.600 7a12 12 0 0 1 20.800 0z" fill="#dd4b39" /><path d="M2.600 7L13 13l-1 12A12 12 0 0 1 2.600 7z" fill="#1da462" /><path d="M23.400 7H13v6l-1 12A12 12 0 0 0 23.400 7z" fill="#ffcd46" /><circle cx="13" cy="13" r="5.500" fill="#fff" /><circle cx="13" cy="13" r="4.300" fill="#4a8af4" /></>,
  },
  {
    label: "Explorer",
    frame: "border border-[#6d8fb5] bg-linear-to-br from-[#5b7ea8] to-[#143a68]",
    icon: <><path d="M1 5h7l2 2h14v15H2z" fill="#e8cf7c" stroke="#b8963e" /><path d="M2 3h5v3H2z" fill="#4aa84a" /><path d="M10 3h5v3h-5z" fill="#c44" /><path d="M1 8h24v12H1z" fill="#f6e7a4" /><path d="M5 24v-7q0-2 2-2h12q2 0 2 2v7h-4v-4H9v4z" fill="#8fcdf0" stroke="#4a90c0" /></>,
  },
  {
    label: "Apps",
    frame: "",
    icon: <><rect x="1" y="1" width="24" height="24" rx="2" fill="#f4f4f4" /><path d="M6 6h4v4H6zM11 6h4v4h-4zM16 6h4v4h-4z" fill="#d8382c" /><path d="M6 11h4v4H6z" fill="#2a9a50" /><path d="M11 11h4v4h-4z" fill="#3b78d8" /><path d="M16 11h4v4h-4z" fill="#e8b020" /><path d="M6 16h4v4H6z" fill="#2a9a50" /><path d="M11 16h4v4h-4zM16 16h4v4h-4z" fill="#d8a020" /></>,
  },
  {
    label: "Sticky Notes",
    frame: "border border-[#6d8fb5] bg-linear-to-br from-[#5b7ea8] to-[#143a68]",
    icon: <><path d="M3 4l11 2-3 12-11-3z" fill="#7fc8a0" /><path d="M8 5l11 3-3 12-11-2z" fill="#8fc4e8" /><path d="M10 11l12-4 4 12-11 5z" fill="#f8e46c" stroke="#d8bc3a" strokeWidth=".6" /></>,
  },
  {
    label: "Outlook",
    frame: "border border-[#6d8fb5] bg-linear-to-br from-[#5b7ea8] to-[#143a68]",
    icon: <><path d="M1 2l22-1v22l-22 1z" fill="#f7d272" stroke="#d99a1c" /><circle cx="8.500" cy="11" r="5" stroke="#d87c10" strokeWidth="3" /><circle cx="20" cy="10" r="5" fill="#f6f6f6" stroke="#caa04a" /><path d="M20 7v3h3" stroke="#777" /><path d="M13 16h12v9H13z" fill="#fbe7a8" stroke="#c08a20" /><path d="M13 16l6 5 6-5" stroke="#c08a20" /></>,
  },
  {
    label: "Evernote",
    frame: "border border-[#6d8fb5] bg-linear-to-br from-[#5b7ea8] to-[#143a68]",
    icon: <><circle cx="13" cy="13" r="12" fill="#fff" /><path d="M10 5h4q2 0 3 2 4 0 4 4 1 6-2 11h-4q-3 0-3-3 0-2 2-2h2v2h-1v1h2v-4q-3 0-4-1-1 3-4 2.500-4-1-4-7.500h5z" fill="#1fa03a" /><path d="M5 9l4-4v4z" fill="#1fa03a" /><circle cx="18" cy="12" r="1" fill="#fff" /></>,
  },
  {
    label: "Inventor",
    frame: "border border-[#dfe6ee] bg-linear-to-br from-[#c8d2dd] to-[#7e93ab]",
    icon: <><path d="M1 0h24v26H1z" fill="#e8e4e0" /><g transform="translate(2 -1)"><InventorMark /></g><text x="24" y="24" fontSize="6" textAnchor="end" fill="#111">PRO</text></>,
  },
  {
    label: "Photo Viewer",
    frame: "border border-[#6d8fb5] bg-linear-to-br from-[#5b7ea8] to-[#143a68]",
    icon: <><path d="M2 5h22v17H2z" fill="#8ccdf0" stroke="#e8f4fc" /><path d="M2 11q6 3 10 4t12 1v3H2z" fill="#2e7a5a" /><path d="M2 18h22v4H2z" fill="#2b6ea8" /><path d="M0 8V3h5M21 3h5v5M26 19v5h-5M5 24H0v-5" stroke="#5ab0e8" strokeWidth="1.500" /></>,
  },
  {
    label: "Snipping Tool",
    frame: "border border-[#4a6f9c] bg-linear-to-br from-[#3d6596] to-[#123866]",
    icon: <><ellipse cx="11" cy="9" rx="9" ry="6" fill="#f6f0f0" stroke="#c83040" strokeWidth="2" /><path d="M2 11v5q3 4 8 4" stroke="#c0b4bc" strokeWidth="2" /><path d="M8 4l9 14M17 5l-2 13" stroke="#667" strokeWidth="1.500" /><ellipse cx="15" cy="21" rx="2.500" ry="3.500" stroke="#2f86c8" strokeWidth="2" /><ellipse cx="21" cy="19" rx="3.500" ry="2.500" stroke="#2f86c8" strokeWidth="2" /></>,
  },
];

function TaskBar() {
  return (
    <footer className="flex h-[32px] shrink-0 items-stretch border-t border-[#4b6d95] bg-linear-to-r from-[#0f3565] via-[#0a3a72] to-[#0b2a55] text-white">
      <button aria-label="Start" className="mr-[5px] flex w-[43px] items-center justify-center">
        <Icon size={30} box={30}>
          <circle cx="15" cy="15" r="14" fill="#1e5c94" stroke="#6fb0dc" />
          <ellipse cx="15" cy="9" rx="11" ry="7" fill="#7fb4dc" opacity=".6" />
          <path d="M8 9q4-2 7 0l-1.500 6q-3-2-7 0z" fill="#e8592a" />
          <path d="M16 9.500q4 2 7 0L21.500 15q-4 2-7 0z" fill="#8cc63a" />
          <path d="M6.500 16q4-2 7 0L12 22q-3-2-7 0z" fill="#4aa8e8" />
          <path d="M14.500 16.500q4 2 7 0L20 22.500q-4 2-7 0z" fill="#fac82c" />
        </Icon>
      </button>
      <div className="grid w-[443px] grid-cols-9 gap-1">
        {apps.map((a) => (
          <button key={a.label} aria-label={a.label} className={`flex items-center justify-center rounded-xs ${a.frame}`}>
            <Icon size={25} box={26}>{a.icon}</Icon>
          </button>
        ))}
      </div>
      <div className="ml-auto flex items-center">
        <button aria-label="Show hidden icons" className="flex w-[18px] justify-center"><Icon size={6} box={7}><path d="M0 5l3.500-4L7 5z" fill="#fff" /></Icon></button>
        <button aria-label="Power" className="flex w-[20px] justify-center"><Icon size={13}><path d="M2 3h8v12H2zM4 1h4v2" stroke="#fff" strokeWidth="1.500" /><path d="M8 5h7v4l-2 2H9z" fill="#fff" /><path d="M10 2v3M13 2v3M11 10v4" stroke="#fff" strokeWidth="1.500" /></Icon></button>
        <button aria-label="Network" className="flex w-[20px] justify-center"><Icon size={13}><path d="M1 12h2v3H1zM4 10h2v5H4zM7 8h2v7H7zM10 5h2v10h-2zM13 2h2v13h-2z" fill="#fff" /></Icon></button>
        <button aria-label="Trend Micro" className="flex w-[19px] justify-center"><Icon size={13}><rect width="16" height="16" rx="2" fill="#cc1034" /><path d="M12 2q-9 2-8 9 3 4 6-1 4-3 2-8zM4 14q4-3 5-8" stroke="#fff" strokeWidth="1.500" /></Icon></button>
        <button aria-label="Volume" className="flex w-[19px] justify-center"><Icon size={13}><path d="M1 5h3l4-4v14l-4-4H1z" fill="#fff" /><path d="M10 5q2 3 0 6M12.500 3.500q3 4.500 0 9" stroke="#fff" strokeWidth="1.200" /></Icon></button>
        <div className="flex w-[60px] flex-col items-center leading-[13px]">
          <span>3:41 PM</span>
          <span>12/12/2018</span>
        </div>
        <button aria-label="Show desktop" className="h-full w-[11px] border border-[#5f7d9f] bg-linear-to-b from-[#3f5f86] to-[#122f57]" />
      </div>
    </footer>
  );
}

export default function App() {
  return (
    <div className="relative flex h-screen flex-col overflow-hidden bg-[#c8c8c8] font-['Open_Sans',sans-serif] text-[9px]">
      <Header />
      <Ribbon />
      <div className="flex min-h-0 flex-1">
        <ModelBrowser />
        <GraphicsWindow />
      </div>
      <div className="flex h-[20px] shrink-0 items-center bg-linear-to-b from-white to-[#b4b4b4] pl-px text-neutral-900">
        Select plane to create sketch or an existing sketch to edit
        <span className="ml-auto w-[31px] border-l border-neutral-300 pr-3 text-center">1</span>
        <span className="w-[31px] border-l border-neutral-300 pr-4 text-center">1</span>
      </div>
      <TaskBar />

      {/* Screen sharing notice */}
      <div className="absolute bottom-[38px] left-1/2 flex h-[35px] w-[404px] -translate-x-1/2 items-center rounded-xs border border-neutral-400/60 bg-white/95 pl-2 text-neutral-600 shadow">
        <span className="mr-2 h-[9px] w-[4px] border-x border-neutral-400" />
        <span className="whitespace-nowrap">Screencastify - Screen Video Recorder is sharing your screen.</span>
        <button className="mr-2 ml-auto h-[25px] w-[80px] rounded-xs bg-[#4f87ec] font-bold text-white">Stop sharing</button>
        <a href="#hide" className="mr-2 text-[#4a6fc4]">Hide</a>
      </div>
    </div>
  );
}
